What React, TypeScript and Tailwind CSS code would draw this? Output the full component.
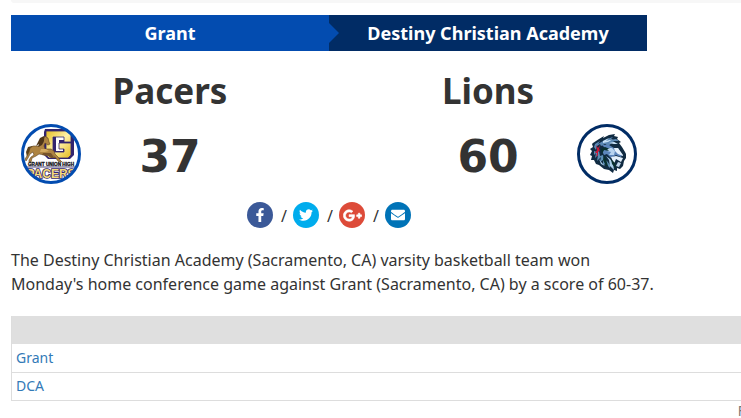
import type { ReactNode } from "react";
import { FaEnvelope, FaFacebookF, FaGooglePlusG, FaTwitter } from "react-icons/fa";

function PacersLogo() {
  return (
    <svg viewBox="0 0 60 60" className="size-[60px] shrink-0" role="img" aria-label="Pacers">
      <defs>
        <clipPath id="pacers-clip">
          <circle cx="30" cy="30" r="28" />
        </clipPath>
        <linearGradient id="pacers-gold" x1="0" y1="0" x2="1" y2="1">
          <stop offset="0" stopColor="#e6bd23" />
          <stop offset="0.5" stopColor="#fff2a8" />
          <stop offset="1" stopColor="#e2b91c" />
        </linearGradient>
      </defs>
      <circle cx="30" cy="30" r="28" fill="#fff" />
      <g clipPath="url(#pacers-clip)">
        {/* block G */}
        <path d="M24 5h26l3 4v10H43v-6h-8v14h7v-2h-4v-9h15v15l-4 4H27l-4-4V8z" fill="#33256e" />
        <path
          d="M25 7h22l3 3v8h-7v-5H32v15h11v-3h-5v-6h12v12l-3 3H28l-3-3V9z"
          fill="url(#pacers-gold)"
          stroke="#33256e"
          strokeWidth="0.8"
        />
        {/* horse */}
        <path d="M11 22l-4 1-2 5 1 5 3-4 1-4 4-1z" fill="#5b401c" />
        <path
          d="M24 12l1 1 2 1 1 4 1 2-2 1-3-2-1 3 1 3 6 0 3 2 1 3 3 3 2 3 2 2-1 1-3-2-3-4-3-2-4-1-3 1-6-1-3 2-4 2-1 4-2 1 0-3 2-3 3-2-1-3-3 2-2 4-2 3-1-2 2-3 2-4 1-4 3-2 7 0 3-3 1-5z"
          fill="#ae8442"
          stroke="#604321"
          strokeWidth="0.6"
        />
        <path d="M23 12l-4 2-2 4-2 4 3-2-1 3 4-2 2-4z" fill="#4f3618" />
        <path d="M20 25l5 0 3 2-4 1-5 0z" fill="#d3aa61" />
        <path d="M22 29l8 0 2 3 3 2-5 0-3-2-6-1z" fill="#77542a" />
        <path d="M4 38h52v5H4z" fill="#fff" />
        <text x="30" y="42" textAnchor="middle" fontSize="4.7" fontWeight="700" fill="#17151c" stroke="#17151c" strokeWidth="0.3" fontFamily="Liberation Sans, sans-serif">
          GRANT UNION HIGH
        </text>
        <path d="M4 43h52" stroke="#292260" strokeWidth="0.8" />
        <text
          x="30"
          y="54"
          textAnchor="middle"
          fontSize="12"
          fontWeight="700"
          fill="#f4dc79"
          stroke="#33256e"
          strokeWidth="1.6"
          paintOrder="stroke"
          fontFamily="Liberation Sans, sans-serif"
        >
          PACERS
        </text>
      </g>
      <circle cx="30" cy="30" r="28.5" fill="none" stroke="#034cb0" strokeWidth="3" />
    </svg>
  );
}

function LionsLogo() {
  return (
    <svg viewBox="0 0 60 60" className="size-[60px] shrink-0" role="img" aria-label="Lions">
      <circle cx="30" cy="30" r="28.5" fill="#fff" stroke="#012c65" strokeWidth="3" />
      {/* mane and head outline */}
      <path
        d="M16 19l6-4 5-3-1 2 6-3 6-1-1 2 4 1-1 2 4 3-2 1 3 4 3 5 1 2 0 4-2 3-1 5-3 3-3-1 0 3-3-1-1 3-4-3-5-1-5-4-3-1-2-4-3 0 1-4-2-1 2-4-2-2 3-2-1-3z"
        fill="#102b42"
      />
      <path d="M18 20l5-3-2 3 5-3 4-2 6-2-3 3 6-1 3 2-6 0 4 3-5-1-4 3-3-2-4 2-1-2-3 2-1 4-2-3z" fill="#5b88b4" />
      <path d="M26 17l6-3-3 3 7-2-5 3-5 1zM32 19l5-1 4 2-4 0z" fill="#c9e3f7" />
      <path d="M25 21l7 0 5 3 4 0 4 7-1 2-5-2-5 3-4-4-3 1-2-4 4-2z" fill="#5c86bc" />
      <path d="M31 24l4 0 3 3-1 4-5 0 2-3-4-1z" fill="#b7d4f0" />
      <path d="M37 24l4 0 5 7 0 1-5-2-3-3zM34 33l5-1 7 2-2 4-5-3-2 5z" fill="#e3f0fc" />
      <path d="M41 38l3 1-2 4-3-1z" fill="#c0d7ec" />
      {/* cheek strands */}
      <path d="M17 27l0 4 2-2-1 5 3-3-1 6 4-4-1 5 3-2 0 5 3-1 4 4 0-3-3-4-3-1-1-5-3 1-1-5-2 1z" fill="#5b8db4" />
      <path d="M29 32l3 4 1 6 4 4-1-7-3-4zM22 35l2 5 4 2-3-3z" fill="#a9cde9" />
      <path d="M27 31l-1 5 3 6 2 0-2-7zM34 35l1 5 4 5-1-6z" fill="#08302e" />
      <path d="M24 25l4-2 5 2-3 0 2 2-5-1-2 4z" fill="#08302e" />
      {/* scar */}
      <path d="M19 21l2 3 2-3-1 4 1 1-2 2 0 3-2 2 1-4-2 0 2-3z" fill="#c61737" />
    </svg>
  );
}

function Team({ mascot, score, logo, logoRight }: { mascot: string; score: number; logo: ReactNode; logoRight?: boolean }) {
  return (
    <section className="px-2.5">
      <h2 className="text-center text-[35px] leading-10 font-bold">{mascot}</h2>
      <div className="mt-2.5 flex h-[66px] items-center">
        {logoRight ? <div className="w-[60px]" /> : logo}
        <div className="flex-1 pt-1.5 text-center font-['DejaVu_Sans',sans-serif] text-[44px] leading-none font-bold">{score}</div>
        {logoRight ? logo : <div className="w-[60px]" />}
      </div>
    </section>
  );
}

const shareLinks = [
  { label: "Facebook", color: "bg-[#3b5998]", icon: <FaFacebookF size={14} /> },
  { label: "Twitter", color: "bg-[#00aced]", icon: <FaTwitter size={14} /> },
  { label: "Google Plus", color: "bg-[#dd4b39]", icon: <FaGooglePlusG size={19} stroke="currentColor" strokeWidth={20} /> },
  { label: "Email", color: "bg-[#0073b7]", icon: <FaEnvelope size={14} /> },
];

const rows = ["Grant", "DCA"];

export default function App() {
  return (
    <main className="overflow-x-hidden bg-white pl-[11px] font-['Noto_Sans',sans-serif] text-[#333]">
      <div className="h-[3px] rounded-bl-sm bg-[#f7f7f7]" />

      <div className="mt-3 max-w-[636px]">
        <div className="grid grid-cols-2 text-center text-lg leading-9 font-bold text-white">
          <div className="relative bg-[#034cb0]">
            Grant
            <svg viewBox="0 0 10 20" className="absolute top-2 left-full h-5 w-2.5" aria-hidden="true">
              <path d="M0 0l10 10L0 20z" fill="#034cb0" />
            </svg>
          </div>
          <div className="bg-[#012c65]">Destiny Christian Academy</div>
        </div>

        <div className="mt-5 grid grid-cols-2">
          <Team mascot="Pacers" score={37} logo={<PacersLogo />} />
          <Team mascot="Lions" score={60} logo={<LionsLogo />} logoRight />
        </div>

        <div className="mt-[15px] flex items-center justify-center text-base leading-6">
          {shareLinks.map((link, i) => (
            <div key={link.label} className="flex items-center">
              {i > 0 && <span className="w-5 pt-0.5 pl-0.5 text-center">/</span>}
              <a
                href="#"
                aria-label={link.label}
                className={`flex size-[26px] items-center justify-center rounded-full text-white ${link.color}`}
              >
                {link.icon}
              </a>
            </div>
          ))}
        </div>
      </div>

      <p className="mt-5 text-base leading-6">
        The Destiny Christian Academy (Sacramento, CA) varsity basketball team won
        <br />
        Monday's home conference game against Grant (Sacramento, CA) by a score of 60-37.
      </p>

      <table className="mt-5 w-full border-collapse border-l border-[#ddd] text-sm">
        <thead>
          <tr className="h-7 bg-[#dfdfdf]">
            <th scope="col" aria-label="Team" />
          </tr>
        </thead>
        <tbody>
          {rows.map((team) => (
            <tr key={team} className="h-7 border-b border-[#ddd]">
              <td className="px-1 leading-5">
                <a href="#" className="text-[#337ab7]">{team}</a>
              </td>
            </tr>
          ))}
        </tbody>
      </table>
      <div className="-mr-1 text-right text-sm leading-5 text-[#777]">F</div>
    </main>
  );
}
